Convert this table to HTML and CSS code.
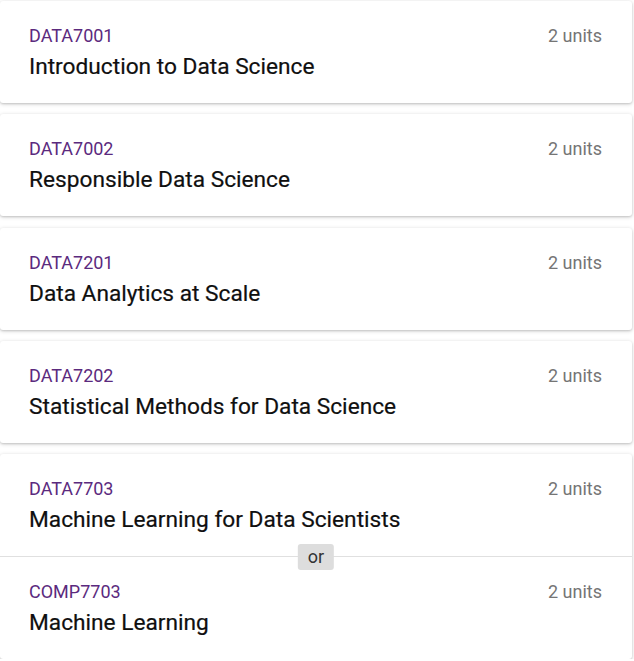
FILE: index.html
```html
<!DOCTYPE html>
<html>
<head>
<meta charset="utf-8">
<link rel="stylesheet" href="styles.css">
</head>
<body>
<div class="list">
  <div class="card">
    <div class="course">
      <div class="info"><div class="code">DATA7001</div><div class="title">Introduction to Data Science</div></div>
      <div class="units">2 units</div>
    </div>
  </div>
  <div class="card">
    <div class="course">
      <div class="info"><div class="code">DATA7002</div><div class="title">Responsible Data Science</div></div>
      <div class="units">2 units</div>
    </div>
  </div>
  <div class="card">
    <div class="course">
      <div class="info"><div class="code">DATA7201</div><div class="title">Data Analytics at Scale</div></div>
      <div class="units">2 units</div>
    </div>
  </div>
  <div class="card">
    <div class="course">
      <div class="info"><div class="code">DATA7202</div><div class="title">Statistical Methods for Data Science</div></div>
      <div class="units">2 units</div>
    </div>
  </div>
  <div class="card">
    <div class="course">
      <div class="info"><div class="code">DATA7703</div><div class="title">Machine Learning for Data Scientists</div></div>
      <div class="units">2 units</div>
    </div>
    <div class="divider"><span class="or">or</span></div>
    <div class="course">
      <div class="info"><div class="code">COMP7703</div><div class="title">Machine Learning</div></div>
      <div class="units">2 units</div>
    </div>
  </div>
</div>
</body>
</html>
```

FILE: styles.css
```css
html, body {
  margin: 0;
  padding: 0;
  background: #ffffff;
}
body {
  font-family: Roboto, "Liberation Sans", sans-serif;
}
.list {
  width: 632px;
  padding-top: 1px;
  display: flex;
  flex-direction: column;
  gap: 11.25px;
}
.card {
  background: #fff;
  border-radius: 3px;
  box-shadow: 0 1px 4px rgba(0,0,0,0.18), 0 1px 2px rgba(0,0,0,0.12);
}
.course {
  display: flex;
  justify-content: space-between;
  align-items: flex-start;
  padding: 23px 30px 0 29px;
  height: 102px;
  box-sizing: border-box;
}
.code {
  color: #5b2a7e;
  font-size: 18px;
  line-height: 24px;
  margin-bottom: 4px;
}
.title {
  color: #0f0f0f;
  font-size: 22.7px;
  line-height: 30px;
  font-weight: 400;
  -webkit-text-stroke: 0.2px #0f0f0f;
}
.units {
  color: #757575;
  font-size: 18px;
  line-height: 24px;
}
.divider {
  position: relative;
  height: 1px;
  background: #e0e0e0;
}
.or {
  position: absolute;
  left: 50%;
  top: 50%;
  transform: translate(-50%, -50%);
  background: #dddddd;
  color: #333;
  font-size: 18px;
  line-height: 26px;
  padding: 0 10px;
  border-radius: 3px;
}
```
